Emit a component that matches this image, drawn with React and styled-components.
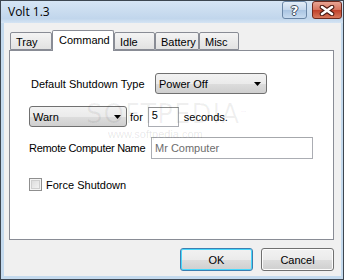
import React from 'react';
import styled, { createGlobalStyle } from 'styled-components';

const GlobalStyle = createGlobalStyle`
  html, body {
    margin: 0;
    padding: 0;
    background: #ffffff;
  }
`;

const tabs = [
  { label: 'Tray', width: 42 },
  { label: 'Command', width: 62, active: true },
  { label: 'Idle', width: 41 },
  { label: 'Battery', width: 44 },
  { label: 'Misc', width: 40 },
];

function Arrow() {
  return (
    <svg width="7" height="4" viewBox="0 0 7 4">
      <path d="M0 0H7L3.5 4Z" fill="#000" />
    </svg>
  );
}

function CloseGlyph() {
  return (
    <svg width="16" height="11" viewBox="0 0 16 11">
      <path
        d="M3 2L13 9M13 2L3 9"
        stroke="#4a1a12"
        strokeWidth="4.6"
        strokeLinecap="round"
        fill="none"
      />
      <path
        d="M3 2L13 9M13 2L3 9"
        stroke="#fff"
        strokeWidth="2.6"
        strokeLinecap="round"
        fill="none"
      />
    </svg>
  );
}

export default function App() {
  return (
    <>
      <GlobalStyle />
      <Window>
        <TitleBar>
          <Title>Volt 1.3</Title>
          <CaptionButtons>
            <HelpButton>?</HelpButton>
            <CloseButton>
              <CloseGlyph />
            </CloseButton>
          </CaptionButtons>
        </TitleBar>
        <Client>
          <TabStrip>
            {tabs.map((t) => (
              <Tab key={t.label} $width={t.width} $active={t.active}>
                {t.label}
              </Tab>
            ))}
          </TabStrip>
          <Panel>
            <Row>
              <Label $width={124} $indent={2}>Default Shutdown Type</Label>
              <Combo $width={112}>
                <span>Power Off</span>
                <Arrow />
              </Combo>
            </Row>
            <Row $top={12}>
              <Combo $width={98}>
                <span>Warn</span>
                <Arrow />
              </Combo>
              <Text $left={3}>for</Text>
              <NumberBox>5</NumberBox>
              <Text $left={5}>seconds.</Text>
            </Row>
            <Row $top={10}>
              <Label $width={122} $tight>Remote Computer Name</Label>
              <TextBox>Mr Computer</TextBox>
            </Row>
            <Row $top={19}>
              <CheckBox />
              <Text $left={4}>Force Shutdown</Text>
            </Row>
            <Watermark>
              SOFTPEDIA<sup>™</sup>
              <small>www.softpedia.com</small>
            </Watermark>
          </Panel>
          <ButtonRow>
            <Button $default>OK</Button>
            <Button>Cancel</Button>
          </ButtonRow>
        </Client>
      </Window>
    </>
  );
}

const Window = styled.div`
  box-sizing: border-box;
  width: 344px;
  height: 280px;
  border: 1px solid #3d4650;
  background: #c4daee;
  display: flex;
  flex-direction: column;
  font-family: 'Liberation Sans', Arial, sans-serif;
  font-size: 11px;
  color: #000;
`;

const TitleBar = styled.div`
  height: 22px;
  display: flex;
  justify-content: space-between;
  align-items: flex-start;
  background: linear-gradient(#d6e5f4, #c1d6ec 80%, #d5e4f3);
`;

const Title = styled.div`
  font-family: 'Open Sans', 'Liberation Sans', sans-serif;
  font-size: 12px;
  color: #000;
  padding: 4px 0 0 7px;
  line-height: 14px;
`;

const CaptionButtons = styled.div`
  display: flex;
  gap: 5px;
  margin-right: 1px;
`;

const CaptionButton = styled.div`
  box-sizing: border-box;
  height: 18px;
  display: flex;
  align-items: center;
  justify-content: center;
  border-radius: 3px;
`;

const HelpButton = styled(CaptionButton)`
  width: 25px;
  border: 1px solid #6a86a6;
  background: linear-gradient(#e4eef8, #c4d7ec 50%, #a9c4e2 51%, #c7dbf0);
  font-family: 'DejaVu Sans', sans-serif;
  font-weight: bold;
  font-size: 13px;
  color: #fff;
  text-shadow: -1px 0 #3c4a5c, 1px 0 #3c4a5c, 0 -1px #3c4a5c, 0 1px #3c4a5c;
`;

const CloseButton = styled(CaptionButton)`
  width: 30px;
  border: 1px solid #6f2a1e;
  background: linear-gradient(#e8a594, #d6735d 50%, #c0402a 51%, #d8785c);
`;

const Client = styled.div`
  flex: 1;
  margin: 0 2px 3px 3px;
  background: #f0f0f0;
  padding: 7px 7px 0 5px;
  display: flex;
  flex-direction: column;
`;

const TabStrip = styled.div`
  height: 20px;
  display: flex;
  align-items: flex-end;
  padding-left: 1px;
`;

const Tab = styled.div`
  box-sizing: border-box;
  width: ${(p) => p.$width}px;
  height: ${(p) => (p.$active ? 21 : 18)}px;
  margin-bottom: ${(p) => (p.$active ? -1 : 0)}px;
  position: relative;
  z-index: ${(p) => (p.$active ? 1 : 0)};
  border: 1px solid #898c95;
  border-bottom: ${(p) => (p.$active ? 'none' : '1px solid #898c95')};
  border-radius: 2px 2px 0 0;
  background: ${(p) => (p.$active ? '#fff' : 'linear-gradient(#f4f4f4, #ebebeb 50%, #e2e2e2)')};
  padding: ${(p) => (p.$active ? '3px 0 0 6px' : '3px 0 0 5px')};
  line-height: 13px;
  white-space: nowrap;
`;

const Panel = styled.div`
  box-sizing: border-box;
  height: 190px;
  border: 1px solid #898c95;
  background: #fff;
  padding: 22px 0 0 19px;
  position: relative;
  display: flex;
  flex-direction: column;
`;

const Row = styled.div`
  display: flex;
  align-items: center;
  margin-top: ${(p) => p.$top || 0}px;
`;

const Label = styled.div`
  width: ${(p) => p.$width}px;
  margin-left: ${(p) => p.$indent || 0}px;
  letter-spacing: ${(p) => (p.$tight ? '-0.3px' : 'normal')};
  white-space: nowrap;
`;

const Text = styled.div`
  margin-left: ${(p) => p.$left || 0}px;
  white-space: nowrap;
`;

const Combo = styled.div`
  box-sizing: border-box;
  width: ${(p) => p.$width}px;
  height: 21px;
  border: 1px solid #707070;
  border-radius: 3px;
  background: linear-gradient(#f2f2f2, #ebebeb 50%, #dddddd 51%, #cfcfcf);
  display: flex;
  align-items: center;
  justify-content: space-between;
  padding: 0 5px 0 3px;
`;

const NumberBox = styled.div`
  box-sizing: border-box;
  width: 31px;
  height: 20px;
  margin-left: 5px;
  border: 1px solid #abadb3;
  border-top-color: #8e8f8f;
  background: #fff;
  padding: 1px 0 0 3px;
`;

const TextBox = styled.div`
  box-sizing: border-box;
  width: 162px;
  height: 22px;
  border: 1px solid #abadb3;
  border-top-color: #a6a8ac;
  background: #fff;
  color: #6d6d6d;
  display: flex;
  align-items: center;
  padding-left: 3px;
`;

const CheckBox = styled.div`
  box-sizing: border-box;
  width: 13px;
  height: 13px;
  border: 1px solid #8f8f8f;
  background: linear-gradient(135deg, #d8d8d8, #f7f7f7);
  box-shadow: inset 0 0 0 1px #f4f4f4, inset 0 0 0 2px #cfcfcf;
`;

const Watermark = styled.div`
  position: absolute;
  left: 76px;
  top: 50px;
  pointer-events: none;
  color: rgba(0, 0, 0, 0.06);
  font-family: 'DejaVu Sans', sans-serif;
  font-size: 26px;
  letter-spacing: 1px;
  line-height: 27px;

  sup {
    font-size: 8px;
    vertical-align: top;
  }

  small {
    display: block;
    font-family: 'Liberation Sans', sans-serif;
    font-size: 11px;
    letter-spacing: 0;
    line-height: 12px;
    margin-left: 22px;
    color: rgba(0, 0, 0, 0.1);
  }
`;

const ButtonRow = styled.div`
  display: flex;
  justify-content: flex-end;
  gap: 8px;
  margin-top: 8px;
`;

const Button = styled.div`
  box-sizing: border-box;
  width: 73px;
  height: 23px;
  border: 1px solid ${(p) => (p.$default ? '#3c7fb1' : '#707070')};
  border-radius: 3px;
  background: linear-gradient(#f2f2f2, #ebebeb 50%, #dddddd 51%, #cfcfcf);
  box-shadow: ${(p) => (p.$default ? 'inset 0 0 0 1px #48d7fb' : 'inset 0 0 0 1px #fcfcfc')};
  display: flex;
  align-items: center;
  justify-content: center;
`;
